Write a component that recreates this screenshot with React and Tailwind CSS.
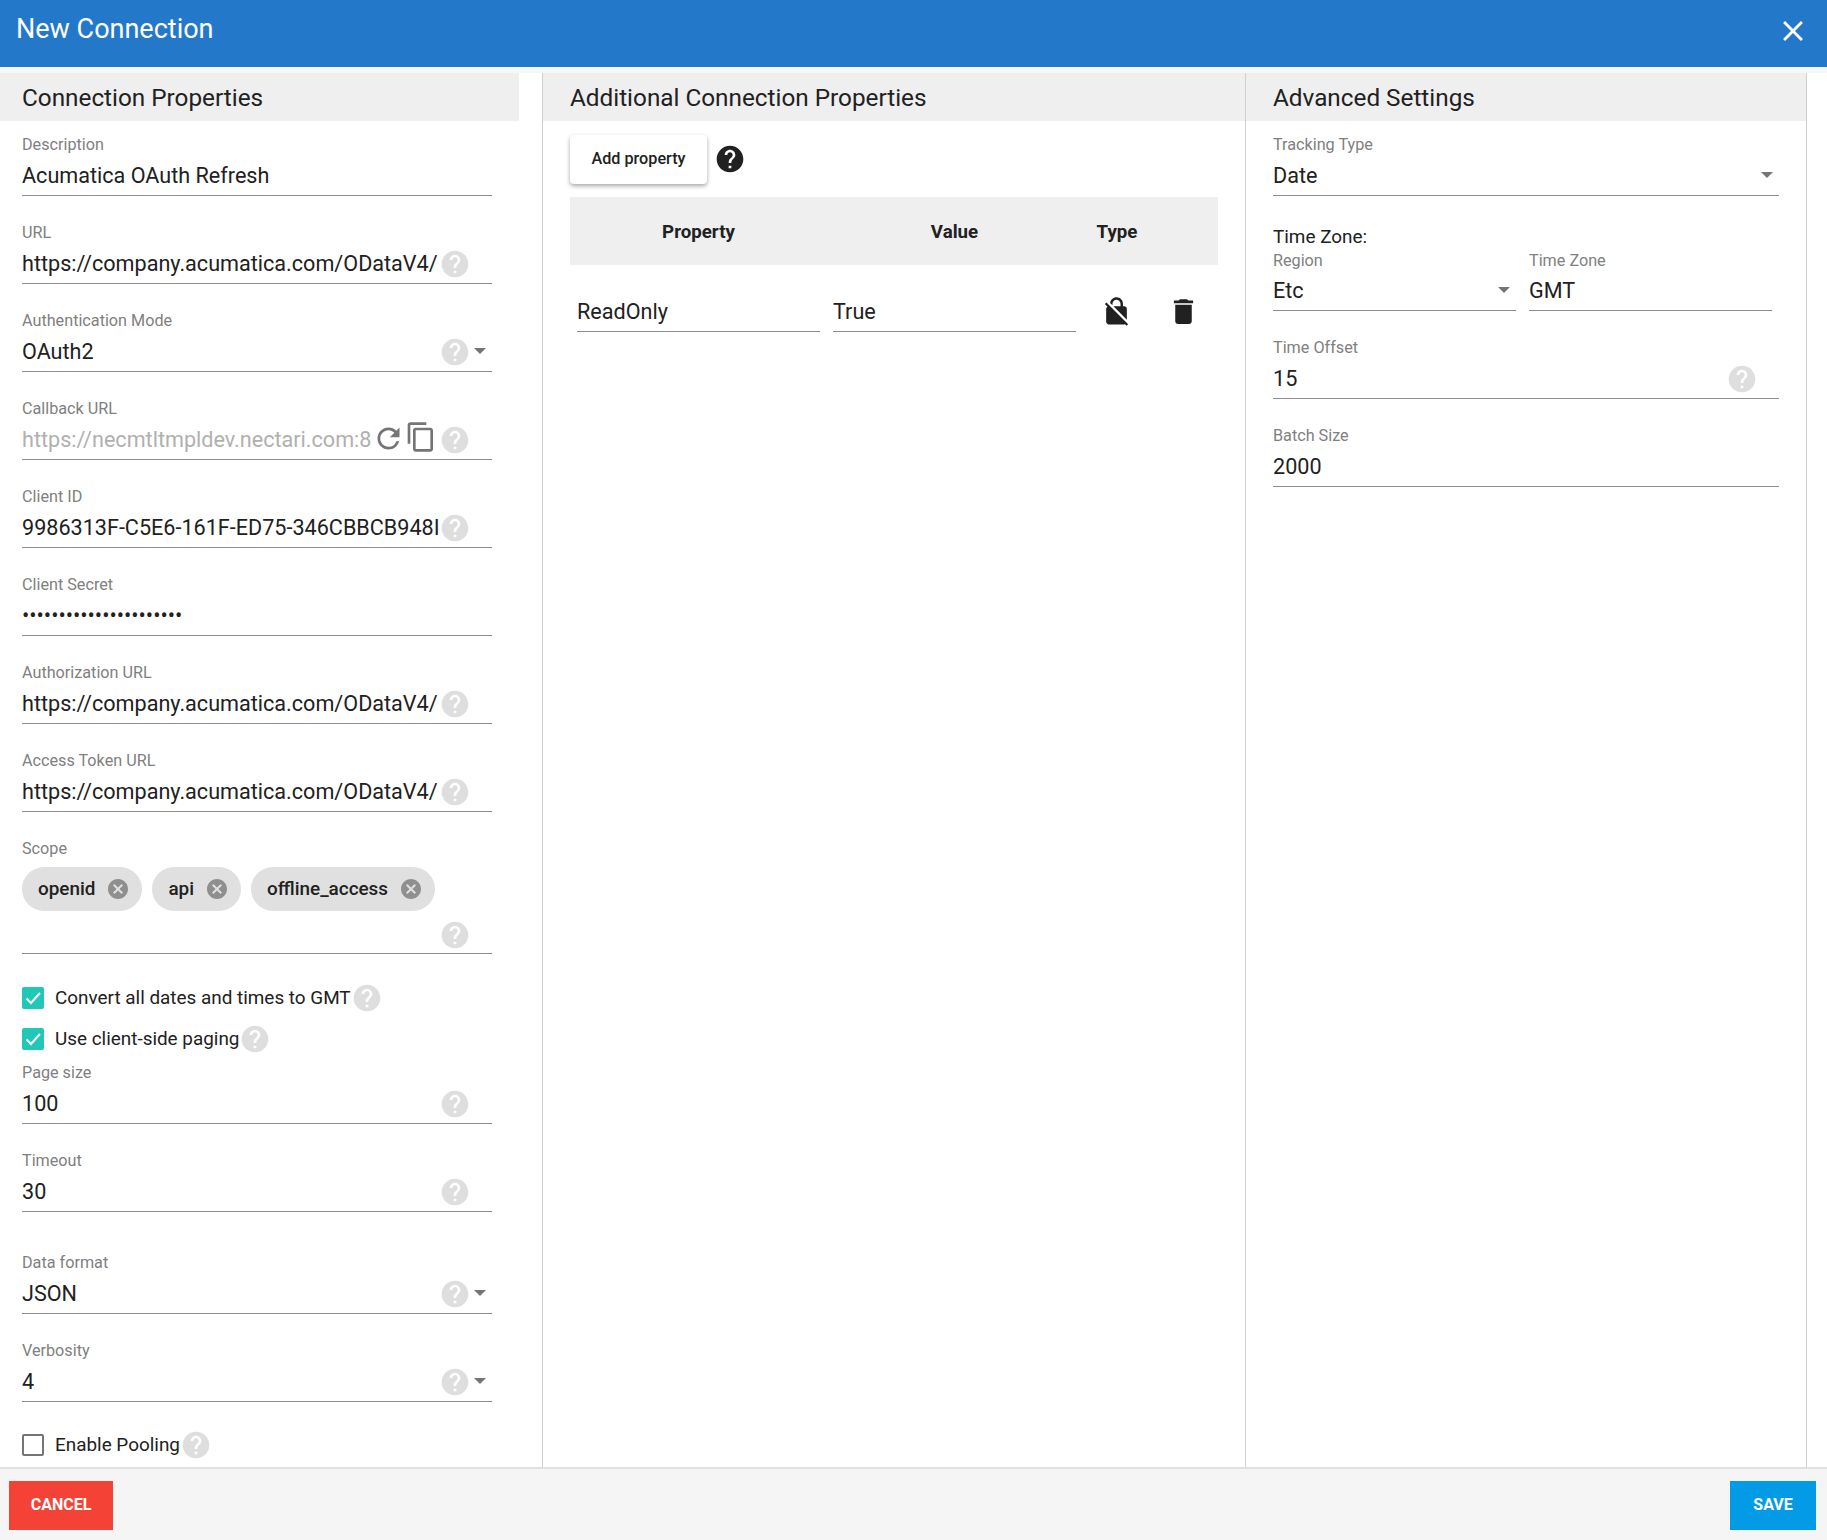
import React from 'react';
import {
  MdCancel,
  MdClose,
  MdContentCopy,
  MdDelete,
  MdHelp,
  MdNoEncryption,
  MdRefresh,
} from 'react-icons/md';

const Help = ({ className = 'mr-[21px]', color = 'text-[#dedede]' }) => (
  <MdHelp size={32} className={`shrink-0 ${color} ${className}`} />
);

const Caret = ({ className = '-ml-[5px] -mr-[2px]' }) => (
  <svg viewBox="7 10 10 5" className={`h-[6px] w-[12px] shrink-0 fill-[#757575] ${className}`}>
    <path d="M7 10l5 5 5-5z" />
  </svg>
);

// label + valeur + soulignement, toujours 62px de haut (sauf tight)
const Field = ({ label, value, help, caret, muted, tight, children, className = '', gap = 'mb-[26px]' }) => (
  <div className={`${gap} ${className}`}>
    <div className="h-5 text-[16.2px] leading-[22px] text-[#808080]">{label}</div>
    <div className={`flex items-center border-b border-[#8e8e8e] ${tight ? 'h-[41px]' : 'h-[42px]'}`}>
      <div className={`min-w-0 flex-1 overflow-hidden whitespace-nowrap pt-[2px] text-[21.6px] leading-[30px] ${muted ? 'text-[#b0b0b0]' : 'text-[#212121]'}`}>
        {value}
      </div>
      {children}
      {help && <Help className={caret ? 'mt-[2px]' : 'mr-[21px] mt-[2px]'} />}
      {caret && <Caret className="ml-[3px] mr-[6px]" />}
    </div>
  </div>
);

const Chip = ({ text }) => (
  <div className="flex h-[44px] items-center rounded-full bg-[#e0e0e0] pl-4 pr-[12px] text-[18.9px] font-medium text-[#212121]">
    {text}
    <MdCancel size={24} className="ml-[11px] text-[#8f8f8f]" />
  </div>
);

const CheckRow = ({ label, checked, className = '' }) => (
  <div className={`flex h-[22px] items-center ${className}`}>
    {checked ? (
      <div className="flex h-[22px] w-[22px] items-center justify-center rounded-[2px] bg-[#22c8b7]">
        <svg viewBox="0 0 22 22" className="h-[22px] w-[22px] fill-none stroke-white stroke-2">
          <polyline points="4.5,11.5 9,16 18,6" />
        </svg>
      </div>
    ) : (
      <div className="h-[22px] w-[22px] rounded-[2px] border-2 border-[#757575]" />
    )}
    <span className="ml-[11px] whitespace-nowrap text-[18.9px] text-[#212121]">{label}</span>
    <Help />
  </div>
);

const SectionTitle = ({ children, className = '' }) => (
  <div className={`flex h-12 items-center bg-[#efefef] pt-[2px] text-[24.3px] text-[#212121] ${className}`}>
    {children}
  </div>
);

export default function App() {
  return (
    <div className="flex h-[1540px] w-[1827px] flex-col overflow-hidden bg-white font-['Roboto',sans-serif]">
      {/* HEADER */}
      <div className="flex h-[67px] shrink-0 items-start justify-between bg-[#2478c9] pl-4 pr-[17px] text-white">
        <div className="mt-[9px] text-[27px] leading-10">New Connection</div>
        <MdClose size={34} className="mt-[14px]" />
      </div>
      <div className="h-[6px] shrink-0 bg-[#f7f7f7]" />

      <div className="flex min-h-0 flex-1">
        {/* COLONNE GAUCHE */}
        <div className="w-[543px] shrink-0 overflow-hidden border-r border-[#cfcfcf]">
          <div className="w-[519px]">
            <SectionTitle className="pl-[22px]">Connection Properties</SectionTitle>
            <div className="px-[22px] pt-[13px] pr-[27px]">
              <Field label="Description" value="Acumatica OAuth Refresh" />
              <Field label="URL" value="https://company.acumatica.com/ODataV4/" help />
              <Field label="Authentication Mode" value="OAuth2" help caret />
              <Field label="Callback URL" value="https://necmtltmpldev.nectari.com:8" help muted>
                <MdRefresh size={33} className="shrink-0 text-[#757575]" />
                <MdContentCopy size={32} className="mb-1 mr-[2px] shrink-0 text-[#757575]" />
              </Field>
              <Field label="Client ID" value="9986313F-C5E6-161F-ED75-346CBBCB948I" help />
              <Field label="Client Secret" value="••••••••••••••••••••••" />
              <Field label="Authorization URL" value="https://company.acumatica.com/ODataV4/" help />
              <Field label="Access Token URL" value="https://company.acumatica.com/ODataV4/" help />

              <div className="h-5 text-[16.2px] leading-[22px] text-[#808080]">Scope</div>
              <div className="mt-[9px] flex gap-[10px]">
                <Chip text="openid" />
                <Chip text="api" />
                <Chip text="offline_access" />
              </div>
              <div className="flex h-[43px] items-center justify-end border-b border-[#8e8e8e] pt-[5px]">
                <Help />
              </div>

              <CheckRow checked label="Convert all dates and times to GMT" className="mt-[33px]" />
              <CheckRow checked label="Use client-side paging" className="mt-[19px]" />

              <Field label="Page size" value="100" help className="mt-3" />
              <Field label="Timeout" value="30" help gap="mb-10" />
              <Field label="Data format" value="JSON" help caret />
              <Field label="Verbosity" value="4" help caret />
              <CheckRow label="Enable Pooling" className="mt-8" />
            </div>
          </div>
        </div>

        {/* COLONNE MILIEU */}
        <div className="w-[703px] shrink-0 border-r border-[#cfcfcf]">
          <SectionTitle className="pl-[27px]">Additional Connection Properties</SectionTitle>
          <div className="pl-[27px] pr-[27px]">
            <div className="mt-[14px] flex items-center">
              <button className="h-[49px] w-[137px] rounded-[4px] bg-white text-[16.2px] font-medium text-[#212121] shadow-[0_2px_4px_rgba(0,0,0,0.35)]">
                Add property
              </button>
              <Help className="mb-[2px] ml-[7px]" color="text-[#212121]" />
            </div>
            <div className="mt-[13px] flex h-[68px] items-center bg-[#efefef] px-[7px] pt-[3px] text-[18.7px] font-bold text-[#212121]">
              <div className="w-[243px] text-center">Property</div>
              <div className="ml-[13px] w-[243px] text-center">Value</div>
              <div className="w-[82px] text-center">Type</div>
            </div>
            <div className="mt-[26px] flex items-start px-[7px]">
              <div className="flex h-[41px] w-[243px] items-center border-b border-[#8e8e8e] pt-[2px] text-[21.6px] text-[#212121]">ReadOnly</div>
              <div className="ml-[13px] flex h-[41px] w-[243px] items-center border-b border-[#8e8e8e] pt-[2px] text-[21.6px] text-[#212121]">True</div>
              <div className="flex h-[41px] w-[80px] items-center justify-center">
                <MdNoEncryption size={31} className="text-[#212121]" />
              </div>
              <div className="flex h-[41px] w-[55px] items-center justify-center">
                <MdDelete size={33} className="text-[#212121]" />
              </div>
            </div>
          </div>
        </div>

        {/* COLONNE DROITE */}
        <div className="w-[561px] shrink-0 border-r border-[#cfcfcf]">
          <SectionTitle className="pl-[27px]">Advanced Settings</SectionTitle>
          <div className="pl-[27px] pr-[27px] pt-[13px]">
            <Field label="Tracking Type" value="Date" caret />
            <div className="mt-[29px] h-[25px] text-[18.9px] leading-6 text-[#212121]">Time Zone:</div>
            <div className="flex">
              <Field label="Region" value="Etc" caret tight className="w-[243px]" />
              <Field label="Time Zone" value="GMT" tight className="ml-[13px] w-[243px]" />
            </div>
            <Field label="Time Offset" value="15" help />
            <Field label="Batch Size" value="2000" />
          </div>
        </div>
      </div>

      {/* FOOTER */}
      <div className="flex h-[73px] shrink-0 items-start justify-between border-t-2 border-[#e0e0e0] bg-[#f5f5f5] pl-[9px] pr-[11px] pt-3">
        <button className="h-[49px] w-[104px] bg-[#f44336] pb-[2px] text-[16px] font-bold text-white">CANCEL</button>
        <button className="h-[49px] w-[86px] bg-[#039be5] pb-[2px] text-[16px] font-bold text-white">SAVE</button>
      </div>
    </div>
  );
}
